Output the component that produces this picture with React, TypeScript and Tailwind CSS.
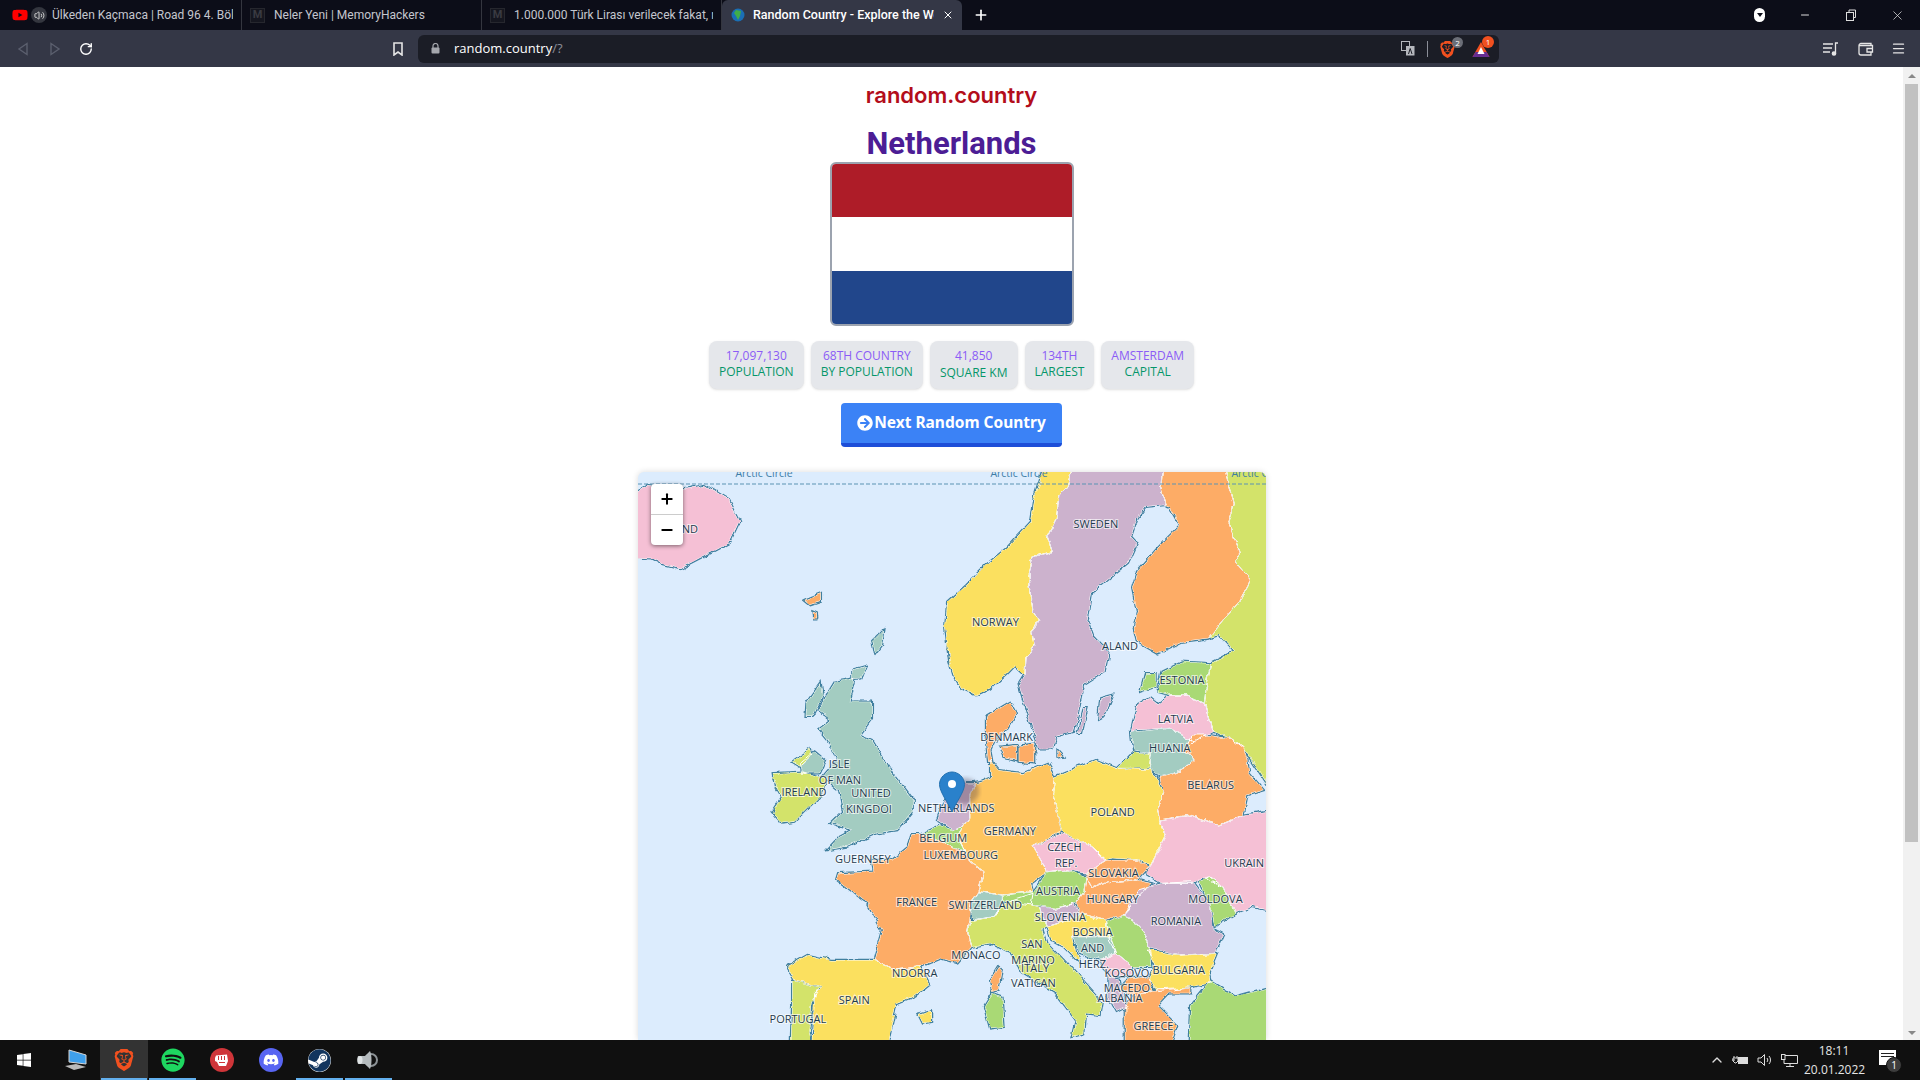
import React from "react";
import {
  FaArrowCircleRight,
  FaDiscord,
  FaSpotify,
  FaSteam,
  FaWindows,
  FaYoutube,
} from "react-icons/fa";
import { SiBrave } from "react-icons/si";
import { ChevronUp, Menu, Minus, Plus, RotateCw, Volume2, X } from "lucide-react";

const PINK = "#f5c0d5";
const YELLOW = "#fbe05f";
const LILAC = "#ccb2cd";
const ORANGE = "#fdac66";
const AMBER = "#fec55f";
const LIME = "#d3e36b";
const GREEN = "#a9d974";
const TEAL = "#a3ccc1";

// traced from the crop of the upper half of the map
const upper: [string, string][] = [
  [PINK, "-30,120 40,60 120,75 180,60 235,100 265,170 240,235 170,280 120,312 80,300 50,280 -30,275"],
  [LIME, "1450,-30 1600,-30 1600,1030 1500,850 1470,820 1425,800 1415,760 1405,715 1408,680 1420,595 1478,560 1440,510 1415,520 1490,410 1518,345 1480,290 1490,260 1465,170 1478,120"],
  [YELLOW, "1090,-30 1070,60 1048,95 1042,160 1020,215 1032,260 985,275 975,330 985,440 998,465 985,500 990,540 968,575 965,630 940,600 920,625 880,670 845,690 810,670 790,630 780,590 770,490 775,410 820,360 870,300 920,250 980,170 990,90 1020,-30"],
  [LILAC, "1090,-30 1305,-30 1298,70 1310,120 1260,125 1240,160 1225,215 1240,235 1220,290 1130,380 1118,470 1130,510 1170,560 1160,620 1110,660 1085,800 1040,815 1030,850 1000,850 975,760 950,660 965,630 968,575 990,540 985,500 998,465 985,440 975,330 985,275 1032,260 1020,215 1042,160 1048,95 1070,60"],
  [ORANGE, "1305,-30 1450,-30 1478,120 1465,170 1490,260 1480,290 1518,345 1490,410 1415,520 1350,530 1290,565 1240,530 1232,490 1240,440 1228,370 1240,320 1290,250 1345,180 1320,125 1310,120 1298,70"],
  [GREEN, "1300,620 1350,590 1420,595 1408,680 1405,715 1360,690 1320,690 1290,680"],
  [GREEN, "1250,680 1262,625 1285,625 1285,665"],
  [PINK, "1225,800 1240,720 1270,700 1290,720 1320,690 1360,690 1405,715 1415,760 1425,800 1380,830 1320,790 1240,795"],
  [ORANGE, "425,405 465,385 465,410 440,420"],
  [ORANGE, "445,440 455,445 456,460 447,460"],
  [TEAL, "592,530 620,495 615,540 598,568"],
  [TEAL, "545,610 575,600 562,640 545,642"],
  [LILAC, "1145,760 1150,700 1180,690 1160,750"],
  [LILAC, "1095,800 1110,730 1118,730 1105,800"],
];

// traced from the crop of the lower half, so these sit 825 further down
const lower: [string, string][] = [
  [TEAL, "1225,-25 1320,-35 1380,5 1355,35 1380,60 1340,100 1300,112 1270,85 1275,40 1230,30"],
  [ORANGE, "1355,35 1375,-15 1410,-15 1470,-5 1500,20 1510,60 1515,100 1550,150 1510,165 1500,225 1440,255 1370,225 1295,240 1290,210 1305,160 1295,115 1340,100 1380,60"],
  [LIME, "1190,85 1230,35 1275,40 1270,85"],
  [PINK, "1600,205 1600,520 1520,500 1480,520 1450,440 1400,410 1375,430 1300,430 1260,400 1275,375 1310,290 1295,240 1370,225 1440,255 1500,225"],
  [YELLOW, "1040,110 1140,60 1190,85 1275,88 1305,160 1290,210 1295,240 1310,290 1275,375 1240,360 1180,355 1160,360 1130,320 1060,280 1055,270 1035,170"],
  [AMBER, "880,60 880,115 860,125 840,130 830,165 830,235 815,260 800,290 820,340 830,365 865,395 850,455 910,465 985,455 980,430 1020,395 985,320 1055,275 1035,170 1040,110 1020,70 960,100 900,90"],
  [LILAC, "760,205 800,130 840,130 830,165 830,235 815,260 790,270 750,240"],
  [GREEN, "710,280 755,255 790,270 815,260 800,290 820,335 790,320 750,300"],
  [ORANGE, "690,280 710,280 750,300 790,320 820,340 830,365 865,395 850,455 835,480 830,540 825,575 835,620 800,670 760,655 710,680 650,690 595,660 615,570 580,490 505,420 510,400 595,395 590,360 640,360 680,320"],
  [LIME, "830,540 840,540 890,530 910,490 985,460 980,495 1000,500 1020,560 1010,570 1020,610 1060,660 1155,790 1150,825 1115,820 1110,880 1080,890 1090,840 1040,760 960,700 930,640 880,610 835,620 825,575"],
  [TEAL, "835,480 850,455 910,465 910,495 890,530 840,540 830,510"],
  [GREEN, "910,465 985,455 1020,395 1070,390 1115,410 1110,455 1090,490 1040,505 980,495 910,480"],
  [LILAC, "1000,500 1040,505 1085,490 1100,520 1060,545 1020,560"],
  [PINK, "985,320 1055,280 1130,320 1165,360 1110,400 1070,390 1020,395"],
  [ORANGE, "1110,400 1165,360 1240,360 1270,380 1240,420 1170,425 1130,445 1115,410"],
  [ORANGE, "1115,410 1130,445 1170,425 1240,420 1275,430 1230,490 1205,525 1160,540 1100,520 1090,490 1110,455"],
  [LILAC, "1205,525 1245,450 1300,430 1375,425 1420,500 1425,570 1450,585 1430,640 1350,645 1270,625 1250,560"],
  [GREEN, "1390,420 1420,410 1450,440 1480,520 1430,560 1420,500"],
  [GREEN, "1165,545 1205,525 1250,560 1270,625 1275,680 1230,680 1190,640 1170,600"],
  [YELLOW, "1020,560 1060,545 1100,520 1160,540 1165,545 1170,590 1080,590 1090,640 1100,670 1060,620 1030,600"],
  [TEAL, "1080,590 1175,590 1190,640 1150,660 1100,640"],
  [PINK, "1150,660 1190,640 1230,680 1225,710 1170,710"],
  [ORANGE, "1215,720 1270,712 1280,750 1230,770 1200,745"],
  [LILAC, "1170,710 1200,720 1210,780 1215,800 1190,815 1170,770"],
  [YELLOW, "1265,630 1350,645 1435,640 1415,700 1420,730 1360,745 1290,755 1270,715 1285,680"],
  [ORANGE, "1210,800 1230,770 1280,750 1370,745 1370,760 1320,760 1290,800 1340,860 1310,960 1210,960"],
  [GREEN, "1365,960 1370,800 1420,725 1480,770 1600,730 1600,960"],
  [YELLOW, "380,680 430,645 490,660 595,660 650,690 710,680 730,730 690,770 650,790 620,960 440,960 450,760 465,740 400,720"],
  [LIME, "395,720 460,740 445,790 435,880 450,960 390,960 395,800"],
  [TEAL, "500,-175 550,-185 535,-115 590,-115 590,-65 560,-15 590,0 640,100 690,180 690,210 650,270 600,280 530,320 480,330 510,290 540,270 490,250 520,215 510,150 470,110 505,60 480,0 460,-30 490,-60 460,-90 480,-135"],
  [TEAL, "430,-110 465,-170 470,-130 445,-70 428,-70"],
  [TEAL, "415,70 450,35 475,60 460,100 420,100"],
  [LIME, "350,100 420,95 480,120 465,165 400,245 370,250 345,215 370,170 355,140"],
  [LIME, "395,65 440,28 445,45 415,80"],
  [ORANGE, "870,-70 930,-115 945,-80 925,-35 895,-10 880,30 885,65 875,65 870,0"],
  [ORANGE, "905,20 945,15 945,60 915,50"],
  [ORANGE, "950,20 990,15 990,70 950,65"],
  [ORANGE, "1045,30 1060,50 1045,52"],
  [ORANGE, "880,720 900,680 908,690 900,750 885,755"],
  [GREEN, "865,800 885,760 910,770 915,860 880,865"],
  [YELLOW, "705,825 735,815 735,845 715,850"],
];

const shapes: [string, string][] = [
  ...upper,
  ...lower.map(([fill, pts]): [string, string] => [
    fill,
    pts
      .split(" ")
      .map((p) => {
        const [x, y] = p.split(",").map(Number);
        return `${x},${y + 825}`;
      })
      .join(" "),
  ]),
];

const upperLabels: [string, number, number][] = [
  ["SWEDEN", 1139, 177],
  ["NORWAY", 893, 470],
  ["ALAND", 1198, 542],
  ["ESTONIA", 1350, 646],
  ["LATVIA", 1334, 762],
  ["DENMARK", 920, 816],
  ["HUANIA", 1320, 850],
];

const lowerLabels: [string, number, number][] = [
  ["ISLE", 510, 72],
  ["OF MAN", 512, 120],
  ["IRELAND", 424, 155],
  ["UNITED", 588, 160],
  ["KINGDOI", 583, 208],
  ["NETHERLANDS", 797, 204],
  ["BELGIUM", 765, 294],
  ["LUXEMBOURG", 808, 344],
  ["GERMANY", 928, 272],
  ["POLAND", 1180, 216],
  ["BELARUS", 1420, 136],
  ["CZECH", 1062, 322],
  ["REP.", 1066, 370],
  ["SLOVAKIA", 1182, 400],
  ["UKRAIN", 1502, 370],
  ["GUERNSEY", 568, 358],
  ["AUSTRIA", 1046, 454],
  ["HUNGARY", 1180, 478],
  ["MOLDOVA", 1432, 476],
  ["FRANCE", 700, 486],
  ["SWITZERLAND", 868, 496],
  ["SLOVENIA", 1052, 530],
  ["ROMANIA", 1335, 543],
  ["BOSNIA", 1131, 576],
  ["AND", 1131, 624],
  ["HERZ.", 1134, 673],
  ["SAN", 982, 611],
  ["MARINO", 985, 659],
  ["ITALY", 990, 684],
  ["VATICAN", 986, 730],
  ["MONACO", 845, 644],
  ["NDORRA", 695, 700],
  ["SPAIN", 547, 780],
  ["PORTUGAL", 409, 836],
  ["KOSOVO", 1215, 698],
  ["BULGARIA", 1342, 690],
  ["MACEDO", 1215, 744],
  ["ALBANIA", 1198, 773],
  ["GREECE", 1280, 858],
];

const mapLabels = [
  ...upperLabels,
  ...lowerLabels.map(([t, x, y]): [string, number, number] => [t, x, y + 825]),
];

const stats = [
  ["17,097,130", "POPULATION"],
  ["68TH COUNTRY", "BY POPULATION"],
  ["41,850", "SQUARE KM"],
  ["134TH", "LARGEST"],
  ["AMSTERDAM", "CAPITAL"],
];

function Tab({ title, icon, active }: { title: string; icon: React.ReactNode; active?: boolean }) {
  return (
    <div
      className={
        active
          ? "w-[240px] h-full flex items-center pl-[9px] pr-2 gap-2 bg-[#343746] rounded-t-md text-white text-[12.5px] font-medium"
          : "w-[240px] h-full flex items-center pl-[8px] pr-2 gap-[9px] border-r border-[#34363f] text-[#c4c6ce]"
      }
    >
      {icon}
      <span className="flex-1 overflow-hidden whitespace-nowrap">{title}</span>
      {active && <X size={12} className="text-white shrink-0" strokeWidth={2} />}
    </div>
  );
}

function MIcon() {
  return (
    <span className="w-[15px] h-[15px] shrink-0 flex items-center justify-center bg-[#15161f] border border-[#26272e] text-[#3a3b42] text-[11px] font-bold">
      M
    </span>
  );
}

function TabBar() {
  return (
    <div className="h-[30px] shrink-0 bg-[#0c0d18] flex items-center text-[12px] font-['Roboto',sans-serif]">
      <div className="w-[242px] h-full flex items-center pl-3 pr-2 gap-[3px] border-r border-[#34363f] text-[#c4c6ce]">
        <FaYoutube size={16} className="text-[#f00] shrink-0" />
        <span className="w-[16px] h-[16px] rounded-full bg-[#34363f] flex items-center justify-center shrink-0">
          <Volume2 size={11} className="text-[#ddd]" />
        </span>
        <span className="ml-[2px] flex-1 overflow-hidden whitespace-nowrap">Ülkeden Kaçmaca | Road 96 4. Bölüm</span>
      </div>
      <Tab title="Neler Yeni | MemoryHackers" icon={<MIcon />} />
      <Tab title="1.000.000 Türk Lirası verilecek fakat, rastgele" icon={<MIcon />} />
      <Tab
        active
        title="Random Country - Explore the World"
        icon={
          <svg width="14" height="14" viewBox="0 0 14 14" className="shrink-0">
            <circle cx="7" cy="7" r="6.5" fill="#1a6fb5" />
            <path d="M5 2 L10 3 L9 8 L7 12 L5 8 L3 5 Z" fill="#3fae49" />
          </svg>
        }
      />
      <Plus size={16} strokeWidth={2.5} className="text-white ml-[11px]" />
      <div className="flex-1" />
      <div className="w-[11px] h-[14px] rounded-full bg-white flex items-center justify-center mr-[34px]">
        <span className="w-0 h-0 border-l-[3px] border-r-[3px] border-t-[4px] border-l-transparent border-r-transparent border-t-[#0c0d18]" />
      </div>
      <Minus size={12} className="text-[#ddd] mr-[34px]" />
      <svg width="12" height="12" viewBox="0 0 12 12" fill="none" stroke="#ddd" className="mr-[33px]">
        <rect x="1.5" y="3.5" width="7" height="8" />
        <path d="M4 3.5 V1 H10.5 V8.5 H8.5" />
      </svg>
      <X size={15} strokeWidth={1.2} className="text-[#ddd] mr-[15px]" />
    </div>
  );
}

function Toolbar() {
  return (
    <div className="h-[37px] shrink-0 bg-[#343746] flex items-center">
      <svg width="14" height="14" viewBox="0 0 14 14" fill="none" stroke="#5b5f6e" strokeWidth="1.4" className="ml-[16px]">
        <path d="M11 1.5 L3 7 L11 12.5 Z" />
      </svg>
      <svg width="14" height="14" viewBox="0 0 14 14" fill="none" stroke="#5b5f6e" strokeWidth="1.4" className="ml-[18px]">
        <path d="M3 1.5 L11 7 L3 12.5 Z" />
      </svg>
      <RotateCw size={14} strokeWidth={2.4} className="text-white ml-[17px]" />
      <svg width="12" height="14" viewBox="0 0 12 14" fill="none" stroke="#e5e5e5" strokeWidth="1.6" className="ml-[299px]">
        <path d="M2 1 H10 V13 L6 10 L2 13 Z" />
      </svg>
      <div className="ml-[14px] w-[1081px] h-[28px] bg-[#1b1d26] rounded-md flex items-center pl-[13px]">
        <svg width="9" height="11" viewBox="0 0 9 11" className="shrink-0">
          <path d="M2 5 V3 A2.5 2.5 0 0 1 7 3 V5" fill="none" stroke="#a5a7ad" strokeWidth="1.2" />
          <rect x="0.5" y="4.5" width="8" height="6" rx="1" fill="#a5a7ad" />
        </svg>
        <span className="ml-[14px] text-[13px] text-white">
          random.country<span className="text-[#8b8e98]">/?</span>
        </span>
        <div className="flex-1" />
        <svg width="14" height="15" viewBox="0 0 14 15">
          <rect x="0.5" y="0.5" width="8" height="9" fill="#1b1d26" stroke="#b5b7bd" />
          <rect x="5" y="5" width="8.5" height="9.5" fill="#b5b7bd" />
          <path d="M7.5 13 L9.2 7.5 L11 13" fill="none" stroke="#1b1d26" strokeWidth="1" />
        </svg>
        <div className="ml-[12px] w-px h-[16px] bg-[#8b8e98]" />
        <div className="ml-[11px] relative w-[24px] h-[20px]">
          <SiBrave size={17} className="text-[#f1501f] absolute left-0 top-[2px]" />
          <span className="absolute right-0 top-[-2px] w-[11px] h-[11px] rounded-full bg-[#6b6e77] text-white text-[8px] leading-[11px] text-center">
            2
          </span>
        </div>
        <div className="ml-[9px] relative w-[22px] h-[20px] mr-[5px]">
          <svg width="18" height="16" viewBox="0 0 17 16" className="absolute left-0 top-[3px]">
            <path d="M8.5 0 L17 15 H0 Z" fill="#f1501f" />
            <path d="M0 15 L3 10 H14 L17 15 Z" fill="#662d91" />
            <path d="M8.5 5 L12 12 H5 Z" fill="#fff" />
          </svg>
          <span className="absolute right-0 top-[-3px] w-[12px] h-[12px] rounded-full bg-[#f1501f] text-white text-[8px] leading-[12px] text-center">
            1
          </span>
        </div>
      </div>
      <div className="flex-1" />
      <svg width="16" height="14" viewBox="0 0 16 14" fill="none" stroke="#e5e5e5" strokeWidth="1.3" className="mr-[19px]">
        <path d="M0 2 H10 M0 6 H9 M0 10 H7" />
        <path d="M12.5 11 V1 H15" />
        <circle cx="11" cy="11.5" r="1.7" fill="#e5e5e5" />
      </svg>
      <svg width="16" height="14" viewBox="0 0 16 14" fill="none" stroke="#e5e5e5" strokeWidth="1.3" className="mr-[17px]">
        <path d="M13 3 V1.5 H3 A2 2 0 0 0 1 3.5 V11 A2 2 0 0 0 3 13 H13 V10" />
        <path d="M1 3.5 H14.5 V10 H9 V6.5 H14.5" />
      </svg>
      <Menu size={15} className="text-[#e5e5e5] mr-[14px]" />
    </div>
  );
}

function MapPanel() {
  return (
    <div className="relative shrink-0 w-[628px] h-[568px] mt-[25px] rounded-t-md overflow-hidden bg-[#dcecfd] shadow-[0_0_6px_rgba(0,0,0,0.15)]">
      <svg width="628" height="568" className="block">
        <defs>
          <clipPath id="land">
            {shapes.map(([, pts], i) => (
              <polygon key={i} points={pts} />
            ))}
          </clipPath>
          <filter id="soft">
            <feGaussianBlur stdDeviation="2" />
          </filter>
          {/* rough coast, the tile has fjords we cannot trace by hand */}
          <filter id="rough" filterUnits="userSpaceOnUse" x="-20" y="-20" width="668" height="608">
            <feTurbulence type="fractalNoise" baseFrequency="0.09" numOctaves="3" seed="4" result="n" />
            <feDisplacementMap in="SourceGraphic" in2="n" scale="6" xChannelSelector="R" yChannelSelector="G" />
            <feGaussianBlur stdDeviation="0.3" />
          </filter>
        </defs>
        <g filter="url(#rough)">
          <g transform="translate(-7 -7) scale(0.40816 0.33333)">
            {shapes.map(([, pts], i) => (
              <polygon key={i} points={pts} fill="none" stroke="#3f7f9f" strokeWidth="2.5" vectorEffect="non-scaling-stroke" />
            ))}
            {shapes.map(([fill, pts], i) => (
              <polygon key={i} points={pts} fill={fill} />
            ))}
            <g clipPath="url(#land)">
              {shapes.map(([, pts], i) => (
                <polygon key={i} points={pts} fill="none" stroke="#fff" strokeWidth="1" vectorEffect="non-scaling-stroke" />
              ))}
            </g>
          </g>
        </g>
        <line x1="0" y1="12" x2="628" y2="12" stroke="#5b93b3" strokeWidth="1" strokeDasharray="4 2" />
        <g fontFamily="'Open Sans', 'Noto Sans', sans-serif" fontSize="10.5" fill="#3f7ea6" textAnchor="middle">
          <text x="126" y="5">Arctic Circle</text>
          <text x="381" y="5">Arctic Circle</text>
          <text x="622" y="5">Arctic Circle</text>
        </g>
        <g
          fontFamily="'Open Sans', 'Noto Sans', sans-serif"
          fontSize="11"
          fontWeight="500"
          fill="#1f3b4e"
          stroke="#ffffff"
          strokeOpacity="0.65"
          strokeWidth="2"
          paintOrder="stroke"
          textAnchor="middle"
        >
          <text x="60" y="61" textAnchor="end">ICELAND</text>
          {mapLabels.map(([t, x, y]) => (
            <text key={t + x} x={x / 2.45 - 7} y={y / 3 - 7 + 4}>
              {t}
            </text>
          ))}
        </g>
        <ellipse cx="327" cy="319" rx="14" ry="13" fill="#4b3a4b" opacity="0.35" filter="url(#soft)" />
        <path
          d="M314 300 C308 300 301.500 305 301.500 312.500 C301.500 320 311 332 314 340 C317 332 326.500 320 326.500 312.500 C326.500 305 320 300 314 300 Z"
          fill="#2a81cb"
          stroke="#2170b0"
        />
        <circle cx="314" cy="312" r="4" fill="#fff" />
      </svg>
      <div className="absolute left-[13px] top-[12px] w-[32px] rounded-sm bg-white shadow-[0_1px_4px_rgba(0,0,0,0.5)] text-black">
        <div className="h-[31px] flex items-center justify-center border-b border-[#ccc]">
          <Plus size={16} strokeWidth={3} />
        </div>
        <div className="h-[30px] flex items-center justify-center">
          <Minus size={16} strokeWidth={3} />
        </div>
      </div>
    </div>
  );
}

function Page() {
  return (
    <div className="flex-1 flex min-h-0 bg-white">
      <main className="flex-1 min-w-0 overflow-hidden flex flex-col items-center">
        <div className="shrink-0 mt-[13px] h-[30px] leading-[30px] text-[#b30d1b] text-[22px] font-semibold font-['Inter',sans-serif]">
          random.country
        </div>
        <h1 className="shrink-0 mt-[16px] h-[36px] leading-[36px] text-[31px] font-bold text-[#4c1d95] font-['Roboto',sans-serif]">
          Netherlands
        </h1>
        <div className="shrink-0 w-[244px] h-[164px] border-2 border-[#9ca3af] rounded-md overflow-hidden flex flex-col">
          <div className="flex-1 bg-[#ae1c28]" />
          <div className="flex-1 bg-white" />
          <div className="flex-1 bg-[#21468b]" />
        </div>
        <div className="shrink-0 mt-[15px] flex gap-[7px] font-['Open_Sans',sans-serif] text-[12px] leading-[16px]">
          {stats.map(([value, label]) => (
            <div key={label} className="h-[48px] px-[10px] pt-[7px] bg-[#e5e7eb] rounded-lg shadow-sm text-center whitespace-nowrap">
              <div className="text-[#8b5cf6]">{value}</div>
              <div className={label === "SQUARE KM" ? "text-[#059669] mt-px" : "text-[#059669]"}>{label}</div>
            </div>
          ))}
        </div>
        <button className="shrink-0 mt-[14px] w-[221px] h-[44px] flex items-center justify-center gap-[1px] bg-[#3b82f6] border-b-4 border-[#1d4ed8] rounded-sm text-white text-[15.5px] font-bold font-['Noto_Sans',sans-serif]">
          <FaArrowCircleRight size={16} />
          Next Random Country
        </button>
        <MapPanel />
      </main>
      <div className="w-[17px] shrink-0 bg-[#f1f1f1] flex flex-col items-center">
        <div className="h-[17px] flex items-center justify-center">
          <span className="w-0 h-0 border-l-[4px] border-r-[4px] border-b-[4px] border-l-transparent border-r-transparent border-b-[#888]" />
        </div>
        <div className="w-[13px] h-[758px] bg-[#c1c1c1]" />
        <div className="flex-1" />
        <div className="h-[14px] flex items-center justify-center">
          <span className="w-0 h-0 border-l-[4px] border-r-[4px] border-t-[4px] border-l-transparent border-r-transparent border-t-[#888]" />
        </div>
      </div>
    </div>
  );
}

function TaskCell({ children, bar, hot }: { children: React.ReactNode; bar?: boolean; hot?: boolean }) {
  return (
    <div className={hot ? "relative w-[48px] h-full flex items-center justify-center bg-[#333]" : "relative w-[49px] h-full flex items-center justify-center"}>
      {children}
      {bar && <div className="absolute bottom-0 left-[1px] right-[1px] h-[2px] bg-[#63b0ee]" />}
    </div>
  );
}

function Taskbar() {
  return (
    <div className="h-[40px] shrink-0 bg-[#101010] flex items-center text-white">
      <div className="w-[52px] h-full flex items-center justify-center pr-1">
        <FaWindows size={16} />
      </div>
      <div className="w-[48px] h-full flex items-center justify-center">
        <svg width="24" height="24" viewBox="0 0 24 24">
          <path d="M5 2 L22 7 V16 L5 14 Z" fill="#3fa0ec" stroke="#d5d5d5" />
          <path d="M1 18 L12 16 L22 19 L10 22 Z" fill="#b9b9b9" />
        </svg>
      </div>
      <TaskCell hot bar>
        <SiBrave size={22} className="text-[#f1501f]" />
      </TaskCell>
      <TaskCell bar>
        <FaSpotify size={24} className="text-[#1ed760]" />
      </TaskCell>
      <TaskCell>
        <span className="w-[24px] h-[24px] rounded-full bg-[#cf3539] flex items-center justify-center">
          <svg width="15" height="13" viewBox="0 0 15 13">
            <path d="M1 4 L2 1.500 L13 0.500 L14 7 L12 12 L5 12 L3 8 L1 7 Z" fill="#fff" />
            <path d="M4.500 2 V6 M7.500 2 V6 M10.500 2 V6 M5 8.500 H11" stroke="#cf3539" strokeWidth="1" fill="none" />
          </svg>
        </span>
      </TaskCell>
      <TaskCell>
        <span className="w-[24px] h-[24px] rounded-full bg-[#5865f2] flex items-center justify-center">
          <FaDiscord size={16} className="text-white" />
        </span>
      </TaskCell>
      <TaskCell bar>
        <span className="w-[23px] h-[23px] rounded-full bg-white flex items-center justify-center">
          <FaSteam size={23} className="text-[#12355e]" />
        </span>
      </TaskCell>
      <TaskCell bar>
        <svg width="22" height="22" viewBox="0 0 22 22" className="mr-[3px]">
          <circle cx="15" cy="11" r="6" fill="none" stroke="#8d9397" strokeWidth="2" />
          <path d="M2 7 L9 7 L14 2 C16 6 16 16 14 20 L9 15 L2 15 C1 12 1 10 2 7 Z" fill="#b4babd" />
          <ellipse cx="4" cy="11" rx="2.500" ry="4" fill="#dfe3e5" />
        </svg>
      </TaskCell>
      <div className="flex-1" />
      <ChevronUp size={16} className="text-[#ddd] mr-[7px]" />
      <svg width="17" height="12" viewBox="0 0 17 12" fill="none" stroke="#ddd" className="mr-[8px]">
        <path d="M0 6 H3 M2 2 V4 M5 2 V4 M1 4 H6 V7 L4 9 H3 L1 7 Z" />
        <rect x="6.500" y="3.500" width="9" height="6" fill="#ddd" />
      </svg>
      <svg width="16" height="14" viewBox="0 0 16 14" fill="none" stroke="#ddd" className="mr-[8px]">
        <path d="M1 5 H4 L7.500 1.500 V12.500 L4 9 H1 Z M10 5 A3 3 0 0 1 10 9 M12 3 A6 6 0 0 1 12 11" />
      </svg>
      <svg width="17" height="14" viewBox="0 0 17 14" fill="none" stroke="#ddd" className="mr-[6px]">
        <rect x="0.500" y="1.500" width="3.500" height="5" />
        <path d="M4 2.500 H16.500 V10.500 H3 V7 M9 10.500 V13 M5 13.500 H13" />
      </svg>
      <div className="w-[60px] text-center text-[12px] leading-[19px] text-[#e5e5e5] font-['Open_Sans',sans-serif]">
        <div>18:11</div>
        <div>20.01.2022</div>
      </div>
      <div className="relative w-[17px] h-[15px] bg-white ml-[15px] mr-[24px] mb-[5px]">
        <div className="mt-[3px] mx-[2px] h-[1px] bg-[#222]" />
        <div className="mt-[2px] mx-[2px] h-[1px] bg-[#222]" />
        <span className="absolute left-[7px] top-[7px] w-[16px] h-[16px] rounded-full bg-[#3d3d3d] border border-[#111] text-[10px] leading-[14px] text-center text-white">
          1
        </span>
      </div>
    </div>
  );
}

export default function App() {
  return (
    <div className="w-full h-screen flex flex-col overflow-hidden font-['Open_Sans','Noto_Sans',sans-serif]">
      <TabBar />
      <Toolbar />
      <Page />
      <Taskbar />
    </div>
  );
}
